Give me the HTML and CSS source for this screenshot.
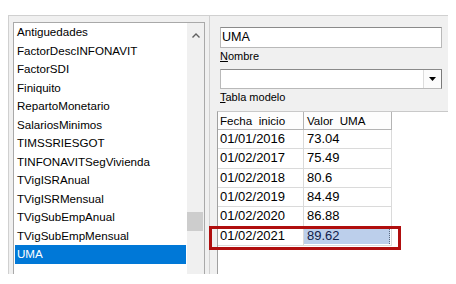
FILE: index.html
```html
<!DOCTYPE html>
<html lang="es">
<head>
    <meta charset="UTF-8">
    <title>Tablas - UMA</title>
    <link rel="stylesheet" href="styles.css">
</head>
<body>
    <div class="window">
        <div class="list-pane">
            <div class="listbox">
                <ul class="items">
                    <li>Antiguedades</li>
                    <li>FactorDescINFONAVIT</li>
                    <li>FactorSDI</li>
                    <li>Finiquito</li>
                    <li>RepartoMonetario</li>
                    <li>SalariosMinimos</li>
                    <li>TIMSSRIESGOT</li>
                    <li>TINFONAVITSegVivienda</li>
                    <li>TVigISRAnual</li>
                    <li>TVigISRMensual</li>
                    <li>TVigSubEmpAnual</li>
                    <li>TVigSubEmpMensual</li>
                    <li class="selected">UMA</li>
                </ul>
                <div class="scrollbar">
                    <span class="scroll-arrow">
                        <svg width="8" height="5" viewBox="0 0 8 5"><path d="M0.5 4.5 L4 1 L7.5 4.5" fill="none" stroke="#606060" stroke-width="1.4"/></svg>
                    </span>
                    <span class="scroll-thumb"></span>
                </div>
            </div>
        </div>

        <div class="detail-pane">
            <div class="form">
                <div class="textbox">UMA</div>
                <div class="field-label"><u>N</u>ombre</div>
                <div class="combo">
                    <span class="combo-value"></span>
                    <span class="combo-button">
                        <svg width="7" height="4" viewBox="0 0 7 4"><path d="M0 0 L7 0 L3.5 4 Z" fill="#000"/></svg>
                    </span>
                </div>
                <div class="field-label"><u>T</u>abla modelo</div>
            </div>

            <div class="grid-area">
                <div class="grid">
                    <div class="cell head">Fecha&nbsp; inicio</div>
                    <div class="cell head">Valor&nbsp; UMA</div>
                    <div class="cell">01/01/2016</div>
                    <div class="cell">73.04</div>
                    <div class="cell">01/02/2017</div>
                    <div class="cell">75.49</div>
                    <div class="cell">01/02/2018</div>
                    <div class="cell">80.6</div>
                    <div class="cell">01/02/2019</div>
                    <div class="cell">84.49</div>
                    <div class="cell">01/02/2020</div>
                    <div class="cell">86.88</div>
                    <div class="cell">01/02/2021</div>
                    <div class="cell current"><span class="current-value">89.62</span></div>
                </div>
                <div class="mark-box"></div>
            </div>
        </div>
    </div>
</body>
</html>
```

FILE: styles.css
```css
body {
    margin: 0;
    background: #fff;
    font-family: 'Liberation Sans', Arial, sans-serif;
    color: #000;
}
.window {
    display: flex;
    width: 440px;
    height: 259px;
    margin: 15px 0 0 8px;
    border-top: 1px solid #d0d0d0;
    border-left: 1px solid #d0d0d0;
    background: #f0f0f0;
    box-sizing: border-box;
}

/* left list */
.list-pane {
    padding: 6px 4px 0 4px;
}
.listbox {
    display: flex;
    width: 192px;
    height: 252px;
    border: 1px solid #a9a9a9;
    border-bottom: none;
    background: #fff;
    box-sizing: border-box;
    overflow: hidden;
}
.items {
    list-style: none;
    margin: 0;
    padding: 0 1px;
    width: 173px;
    box-sizing: border-box;
}
.items li {
    height: 18.5px;
    line-height: 18.5px;
    padding-left: 2px;
    font-size: 11.6px;
    white-space: nowrap;
}
.items li.selected {
    background: #0078d7;
    color: #fff;
}
.scrollbar {
    display: flex;
    flex-direction: column;
    width: 17px;
    background: #f0f0f0;
}
.scroll-arrow {
    display: flex;
    justify-content: center;
    align-items: center;
    height: 17px;
    padding-top: 4px;
}
.scroll-thumb {
    width: 16px;
    height: 19px;
    margin-top: 168px;
    background: #cdcdcd;
}

/* right side */
.detail-pane {
    display: flex;
    flex-direction: column;
    width: 239px;
    border-left: 1px solid #d0d0d0;
    box-sizing: border-box;
}
.form {
    padding: 11px 6px 5px 10px;
}
.textbox {
    height: 21px;
    line-height: 19px;
    padding-left: 1px;
    border: 1px solid #b9b9b9;
    border-top-color: #8a8a8a;
    background: #fff;
    font-size: 12.6px;
    box-sizing: border-box;
}
.field-label {
    height: 21px;
    line-height: 17px;
    font-size: 11px;
}
.field-label + .field-label,
.combo + .field-label {
    height: 17px;
    line-height: 17px;
}
.combo {
    display: flex;
    height: 20px;
    border: 1px solid #b9b9b9;
    border-top-color: #8a8a8a;
    border-right-color: #7a7a7a;
    background: #fff;
    box-sizing: border-box;
}
.combo-value {
    flex: 1;
}
.combo-button {
    display: flex;
    justify-content: center;
    align-items: center;
    width: 17px;
    border-left: 1px solid #dcdcdc;
    background: #fbfbfb;
}

/* grid */
.grid-area {
    position: relative;
    flex: 1;
    padding-left: 7px;
}
.grid {
    display: grid;
    grid-template-columns: 86px 88px;
    grid-template-rows: 18px repeat(6, 19.33px);
    height: 100%;
    align-content: start;
    border-top: 1px solid #c9c9c9;
    border-left: 1px solid #a0a0a0;
    background: #fff;
    box-sizing: border-box;
}
.cell {
    padding-left: 2px;
    border-right: 1px solid #dadada;
    border-bottom: 1px solid #dadada;
    font-size: 13px;
    line-height: 18px;
    white-space: nowrap;
    box-sizing: border-box;
}
.cell:nth-child(even) {
    padding-left: 3px;
}
.cell.head {
    font-size: 11.6px;
    line-height: 17px;
    border-color: #b4b4b4;
    background: #fdfdfd;
}
.cell.current {
    padding: 1px 1px 1px 0;
}
.current-value {
    display: block;
    height: 100%;
    padding-left: 3px;
    line-height: 16px;
    background: #bccfeb;
    border-right: 1px dotted #5a6a80;
    color: #10204a;
    box-sizing: border-box;
}
.mark-box {
    position: absolute;
    left: -1px;
    top: 115px;
    width: 192px;
    height: 24px;
    border: 3px solid #b00e0e;
    box-sizing: border-box;
}
```
